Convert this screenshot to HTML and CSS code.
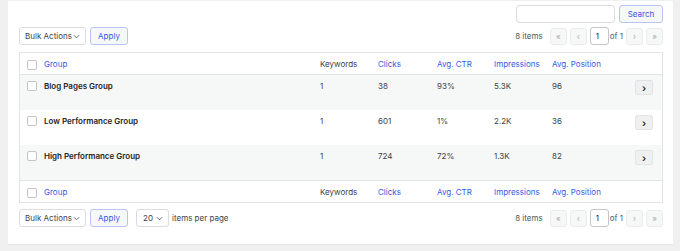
FILE: index.html
```html
<!DOCTYPE html>
<html>
<head>
<meta charset="utf-8">
<link rel="stylesheet" href="styles.css">
</head>
<body>
<div class="panel">
  <div class="search-row">
    <input class="search-input" type="text">
    <button class="search-btn">Search</button>
  </div>

  <div class="tablenav">
    <div class="actions">
      <div class="select bulk"><span>Bulk Actions</span><svg class="chev" viewBox="0 0 8 5" width="7" height="5"><path d="M1 1l3 3 3-3" fill="none" stroke="#50575e" stroke-width="1"/></svg></div>
      <button class="apply">Apply</button>
    </div>
    <div class="pager">
      <span class="count">8 items</span>
      <span class="pbtn">«</span>
      <span class="pbtn">‹</span>
      <span class="pinput">1</span>
      <span class="of">of 1</span>
      <span class="pbtn">›</span>
      <span class="pbtn">»</span>
    </div>
  </div>

  <div class="table">
    <div class="row head">
      <span class="cb"></span>
      <span class="link">Group</span>
      <span>Keywords</span>
      <span class="link">Clicks</span>
      <span class="link">Avg. CTR</span>
      <span class="link">Impressions</span>
      <span class="link">Avg. Position</span>
      <span></span>
    </div>
    <div class="row body alt">
      <span class="cb"></span>
      <span class="name">Blog Pages Group</span>
      <span>1</span>
      <span>38</span>
      <span>93%</span>
      <span>5.3K</span>
      <span>96</span>
      <span class="go">›</span>
    </div>
    <div class="row body">
      <span class="cb"></span>
      <span class="name">Low Performance Group</span>
      <span>1</span>
      <span>601</span>
      <span>1%</span>
      <span>2.2K</span>
      <span>36</span>
      <span class="go">›</span>
    </div>
    <div class="row body alt">
      <span class="cb"></span>
      <span class="name">High Performance Group</span>
      <span>1</span>
      <span>724</span>
      <span>72%</span>
      <span>1.3K</span>
      <span>82</span>
      <span class="go">›</span>
    </div>
    <div class="row head foot">
      <span class="cb"></span>
      <span class="link">Group</span>
      <span>Keywords</span>
      <span class="link">Clicks</span>
      <span class="link">Avg. CTR</span>
      <span class="link">Impressions</span>
      <span class="link">Avg. Position</span>
      <span></span>
    </div>
  </div>

  <div class="tablenav bottom">
    <div class="actions">
      <div class="select bulk"><span>Bulk Actions</span><svg class="chev" viewBox="0 0 8 5" width="7" height="5"><path d="M1 1l3 3 3-3" fill="none" stroke="#50575e" stroke-width="1"/></svg></div>
      <button class="apply">Apply</button>
      <div class="select per"><span>20</span><svg class="chev" viewBox="0 0 8 5" width="7" height="5"><path d="M1 1l3 3 3-3" fill="none" stroke="#50575e" stroke-width="1"/></svg></div>
      <span class="perlabel">items per page</span>
    </div>
    <div class="pager">
      <span class="count">8 items</span>
      <span class="pbtn">«</span>
      <span class="pbtn">‹</span>
      <span class="pinput">1</span>
      <span class="of">of 1</span>
      <span class="pbtn">›</span>
      <span class="pbtn">»</span>
    </div>
  </div>
</div>
</body>
</html>
```

FILE: styles.css
```css
* { box-sizing: border-box; }
html, body { margin: 0; padding: 0; }
body {
  background: #f0f0f1;
  font-family: Inter, "Noto Sans", sans-serif;
  font-size: 8px;
  color: #3c434a;
  padding: 1px 7px 8px 8px;
  white-space: nowrap;
}
.panel {
  background: #fff;
  padding: 4px 10px 17px 11px;
  box-shadow: 0 1px 1px rgba(0,0,0,0.04);
}
.search-row {
  display: flex;
  justify-content: flex-end;
  gap: 4px;
  height: 18px;
}
.search-input {
  width: 99px;
  height: 18px;
  border: 1px solid #dcdcde;
  border-radius: 3px;
  background: #fff;
  margin: 0;
  padding: 0;
}
.search-btn {
  width: 44px;
  height: 18px;
  border: 1px solid #b9c4f5;
  border-radius: 3px;
  background: #f6f7f7;
  color: #3858e9;
  font: inherit;
  padding: 0;
  margin: 0;
}
.tablenav {
  display: flex;
  justify-content: space-between;
  align-items: center;
  height: 18px;
  margin-top: 4px;
}
.tablenav.bottom { margin-top: 6px; }
.actions {
  display: flex;
  align-items: center;
  gap: 4px;
}
.select {
  display: flex;
  align-items: center;
  justify-content: space-between;
  height: 18px;
  border: 1px solid #dcdcde;
  border-radius: 3px;
  background: #fff;
  padding: 0 5px 0 5px;
  color: #3c434a;
}
.bulk { width: 67px; }
.per { width: 33px; margin-left: 4px; padding: 0 5px 0 6px; }
.chev { display: block; }
.apply {
  width: 38px;
  height: 18px;
  border: 1px solid #b9c4f5;
  border-radius: 3px;
  background: #f6f7f7;
  color: #3858e9;
  font: inherit;
  padding: 0;
  margin: 0;
}
.perlabel { margin-left: -1px; color: #3c434a; }
.pager {
  display: flex;
  align-items: center;
  gap: 3px;
}
.count { margin-right: 4px; color: #50575e; }
.pbtn {
  width: 17px;
  height: 17px;
  display: flex;
  align-items: center;
  justify-content: center;
  background: #f6f7f7;
  border: 1px solid #ececec;
  border-radius: 3px;
  color: #a7aaad;
  font-size: 8px;
}
.pinput {
  width: 19px;
  height: 18px;
  border: 1px solid #c3c4c7;
  border-radius: 3px;
  display: flex;
  align-items: center;
  padding-left: 5px;
  color: #1d2327;
}
.of { margin-left: -2px; color: #50575e; }
.table {
  margin-top: 7px;
  border: 1px solid #e2e4e7;
}
.row {
  display: grid;
  grid-template-columns: 24px 276px 58px 59px 57px 58px 1fr 27px;
  align-items: center;
}
.row.head { height: 22px; border-bottom: 1px solid #e2e4e7; }
.row.foot { border-bottom: none; border-top: 1px solid #e2e4e7; height: 22px; }
.row.body {
  height: 35px;
  align-items: start;
  padding-top: 5px;
  line-height: 12px;
}
.row.alt { background: #f6f7f7; }
.cb {
  width: 10px;
  height: 10px;
  border: 1px solid #c3c4c7;
  border-radius: 2px;
  background: #fff;
  margin-left: 7px;
}
.head .cb { margin-top: 3px; }
.body .cb { margin-top: 1px; }
.link { color: #3858e9; }
.name { font-weight: 600; color: #1d2327; }
.go {
  width: 18px;
  height: 15px;
  margin-top: 0;
  border: 1px solid #e2e4e7;
  border-radius: 2px;
  background: #f0f0f1;
  display: flex;
  align-items: center;
  justify-content: center;
  color: #1d2327;
  font-size: 10px;
  font-weight: 600;
}
```
